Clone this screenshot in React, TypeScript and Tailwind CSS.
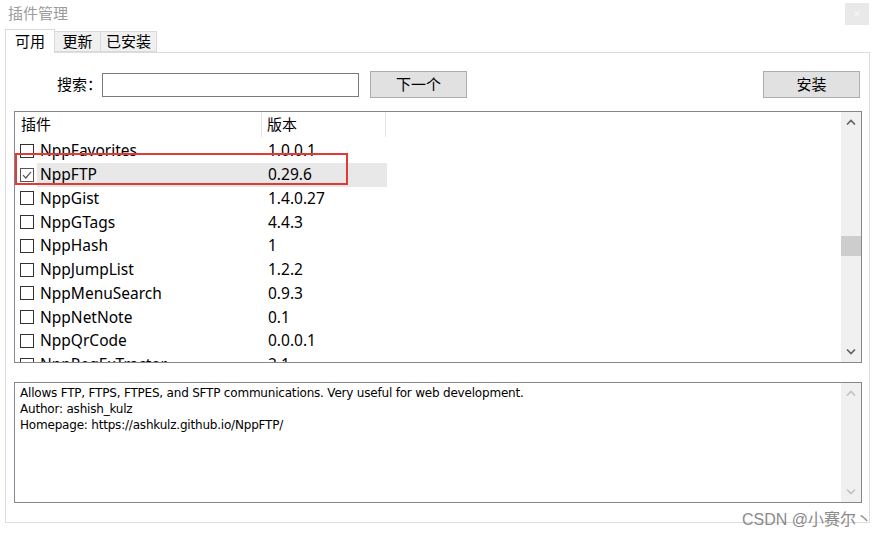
import React from 'react';

const plugins = [
    { name: 'NppFavorites', version: '1.0.0.1' },
    { name: 'NppFTP', version: '0.29.6', checked: true },
    { name: 'NppGist', version: '1.4.0.27' },
    { name: 'NppGTags', version: '4.4.3' },
    { name: 'NppHash', version: '1' },
    { name: 'NppJumpList', version: '1.2.2' },
    { name: 'NppMenuSearch', version: '0.9.3' },
    { name: 'NppNetNote', version: '0.1' },
    { name: 'NppQrCode', version: '0.0.0.1' },
    { name: 'NppRegExTractor', version: '2.1' },
];

const Check: React.FC<{ checked?: boolean }> = ({ checked }) => (
    <div className={`w-[14px] h-[14px] shrink-0 bg-white border ${checked ? 'border-[#555]' : 'border-[#333]'} flex items-center justify-center`}>
        {checked && (
            <svg width="10" height="10" viewBox="0 0 10 10">
                <path d="M1 5.2 L3.8 8 L9 1.8" fill="none" stroke="#555" strokeWidth="1.2" />
            </svg>
        )}
    </div>
);

const Chevron: React.FC<{ up?: boolean; color: string }> = ({ up, color }) => (
    <svg width="10" height="6" viewBox="0 0 10 6">
        <path d={up ? 'M1 5.5 L5 1.5 L9 5.5' : 'M1 0.5 L5 4.5 L9 0.5'} fill="none" stroke={color} strokeWidth="1.6" />
    </svg>
);

export default function App() {
    return (
        <div className="w-[886px] h-[540px] bg-white relative overflow-hidden text-[#000] font-['Noto_Sans','Noto_Sans_CJK_SC',sans-serif]">
            {/* title bar */}
            <div className="h-[29px] flex items-start justify-between pl-[8px] pr-[17px]">
                <div className="text-[15px] leading-[26px] text-[#9b9b9b]">插件管理</div>
                <div className="mt-[3px] w-[24px] h-[22px] bg-[#e9e9e9] flex items-center justify-center text-[12px] text-[#f8f8f8]">×</div>
            </div>

            {/* tabs */}
            <div className="ml-[5px] h-[23px] flex items-end text-[15px] whitespace-nowrap">
                <div className="h-[24px] w-[50px] bg-white border border-b-0 border-[#d9d9d9] flex items-center justify-center relative z-10 -mb-px">可用</div>
                <div className="h-[21px] w-[46px] bg-[#f0f0f0] border border-l-0 border-[#d9d9d9] flex items-center justify-center">更新</div>
                <div className="h-[21px] w-[56px] bg-[#f0f0f0] border border-l-0 border-[#d9d9d9] flex items-center justify-center">已安装</div>
            </div>

            {/* panel */}
            <div className="ml-[5px] w-[865px] h-[471px] border border-[#dcdcdc] flex flex-col">
                <div className="h-[45px] pt-[18px] flex items-center text-[15px] whitespace-nowrap">
                    <div className="ml-[51px] w-[44px] shrink-0">搜索：</div>
                    <div className="ml-[1px] w-[257px] h-[24px] shrink-0 border border-[#7a7a7a] bg-white" />
                    <div className="ml-[11px] w-[97px] h-[27px] shrink-0 bg-[#e1e1e1] border border-[#adadad] flex items-center justify-center">下一个</div>
                    <div className="ml-auto mr-[9px] w-[97px] h-[27px] shrink-0 bg-[#e1e1e1] border border-[#adadad] flex items-center justify-center">安装</div>
                </div>

                {/* plugin list */}
                <div className="mt-[13px] ml-[8px] w-[848px] h-[252px] border border-[#828790] flex relative">
                    <div className="flex-1 flex flex-col overflow-hidden">
                        <div className="h-[25px] shrink-0 flex text-[15px] bg-white">
                            <div className="w-[247px] pl-[6px] leading-[25px] border-r border-[#e5e5e5]">插件</div>
                            <div className="w-[124px] pl-[5px] leading-[25px] border-r border-[#e5e5e5]">版本</div>
                        </div>
                        <div className="h-[5px] shrink-0 bg-white relative z-10" />
                        <div className="flex-1 overflow-hidden">
                            <div className="-mt-[3px]">
                                {plugins.map((p) => (
                                    <div key={p.name} className="h-[23.75px] flex items-center text-[15.5px]">
                                        <div className="pl-[5px] pr-[3px] flex items-center">
                                            <Check checked={p.checked} />
                                        </div>
                                        <div className={`h-full flex items-center ${p.checked ? 'bg-[#e8e8e8]' : ''}`}>
                                            <div className="w-[226px] pl-[3px] leading-[23px]">{p.name}</div>
                                            <div className="w-[124px] pl-[5px] leading-[23px]">{p.version}</div>
                                        </div>
                                    </div>
                                ))}
                            </div>
                        </div>
                    </div>
                    <div className="w-[20px] bg-[#f0f0f0] flex flex-col items-center justify-between py-[7px]">
                        <Chevron up color="#606060" />
                        <div className="flex-1 w-full flex flex-col">
                            <div className="h-[111px]" />
                            <div className="h-[20px] w-full bg-[#cdcdcd]" />
                        </div>
                        <Chevron color="#606060" />
                    </div>
                    {/* red annotation */}
                    <div className="absolute left-[0px] top-[41px] w-[333px] h-[32px] border-2 border-[#e53935] pointer-events-none" />
                </div>

                {/* description */}
                <div className="mt-[19px] ml-[8px] w-[848px] h-[121px] border border-[#828790] flex">
                    <div className="flex-1 pl-[5px] pt-[2px] text-[12px] leading-[16px] font-['DejaVu_Sans','Noto_Sans',sans-serif] tracking-[-0.2px]">
                        <div>Allows FTP, FTPS, FTPES, and SFTP communications. Very useful for web development.</div>
                        <div>Author: ashish_kulz</div>
                        <div>Homepage: https://ashkulz.github.io/NppFTP/</div>
                    </div>
                    <div className="w-[20px] bg-[#f0f0f0] flex flex-col items-center justify-between py-[7px]">
                        <Chevron up color="#c2c2c2" />
                        <Chevron color="#c2c2c2" />
                    </div>
                </div>
            </div>

            {/* watermark */}
            <div className="absolute right-[14px] top-[508px] text-[16px] text-[#8a8a8a] font-['Liberation_Sans','Noto_Sans_CJK_SC',sans-serif]">CSDN @小赛尔丶</div>
        </div>
    );
}
